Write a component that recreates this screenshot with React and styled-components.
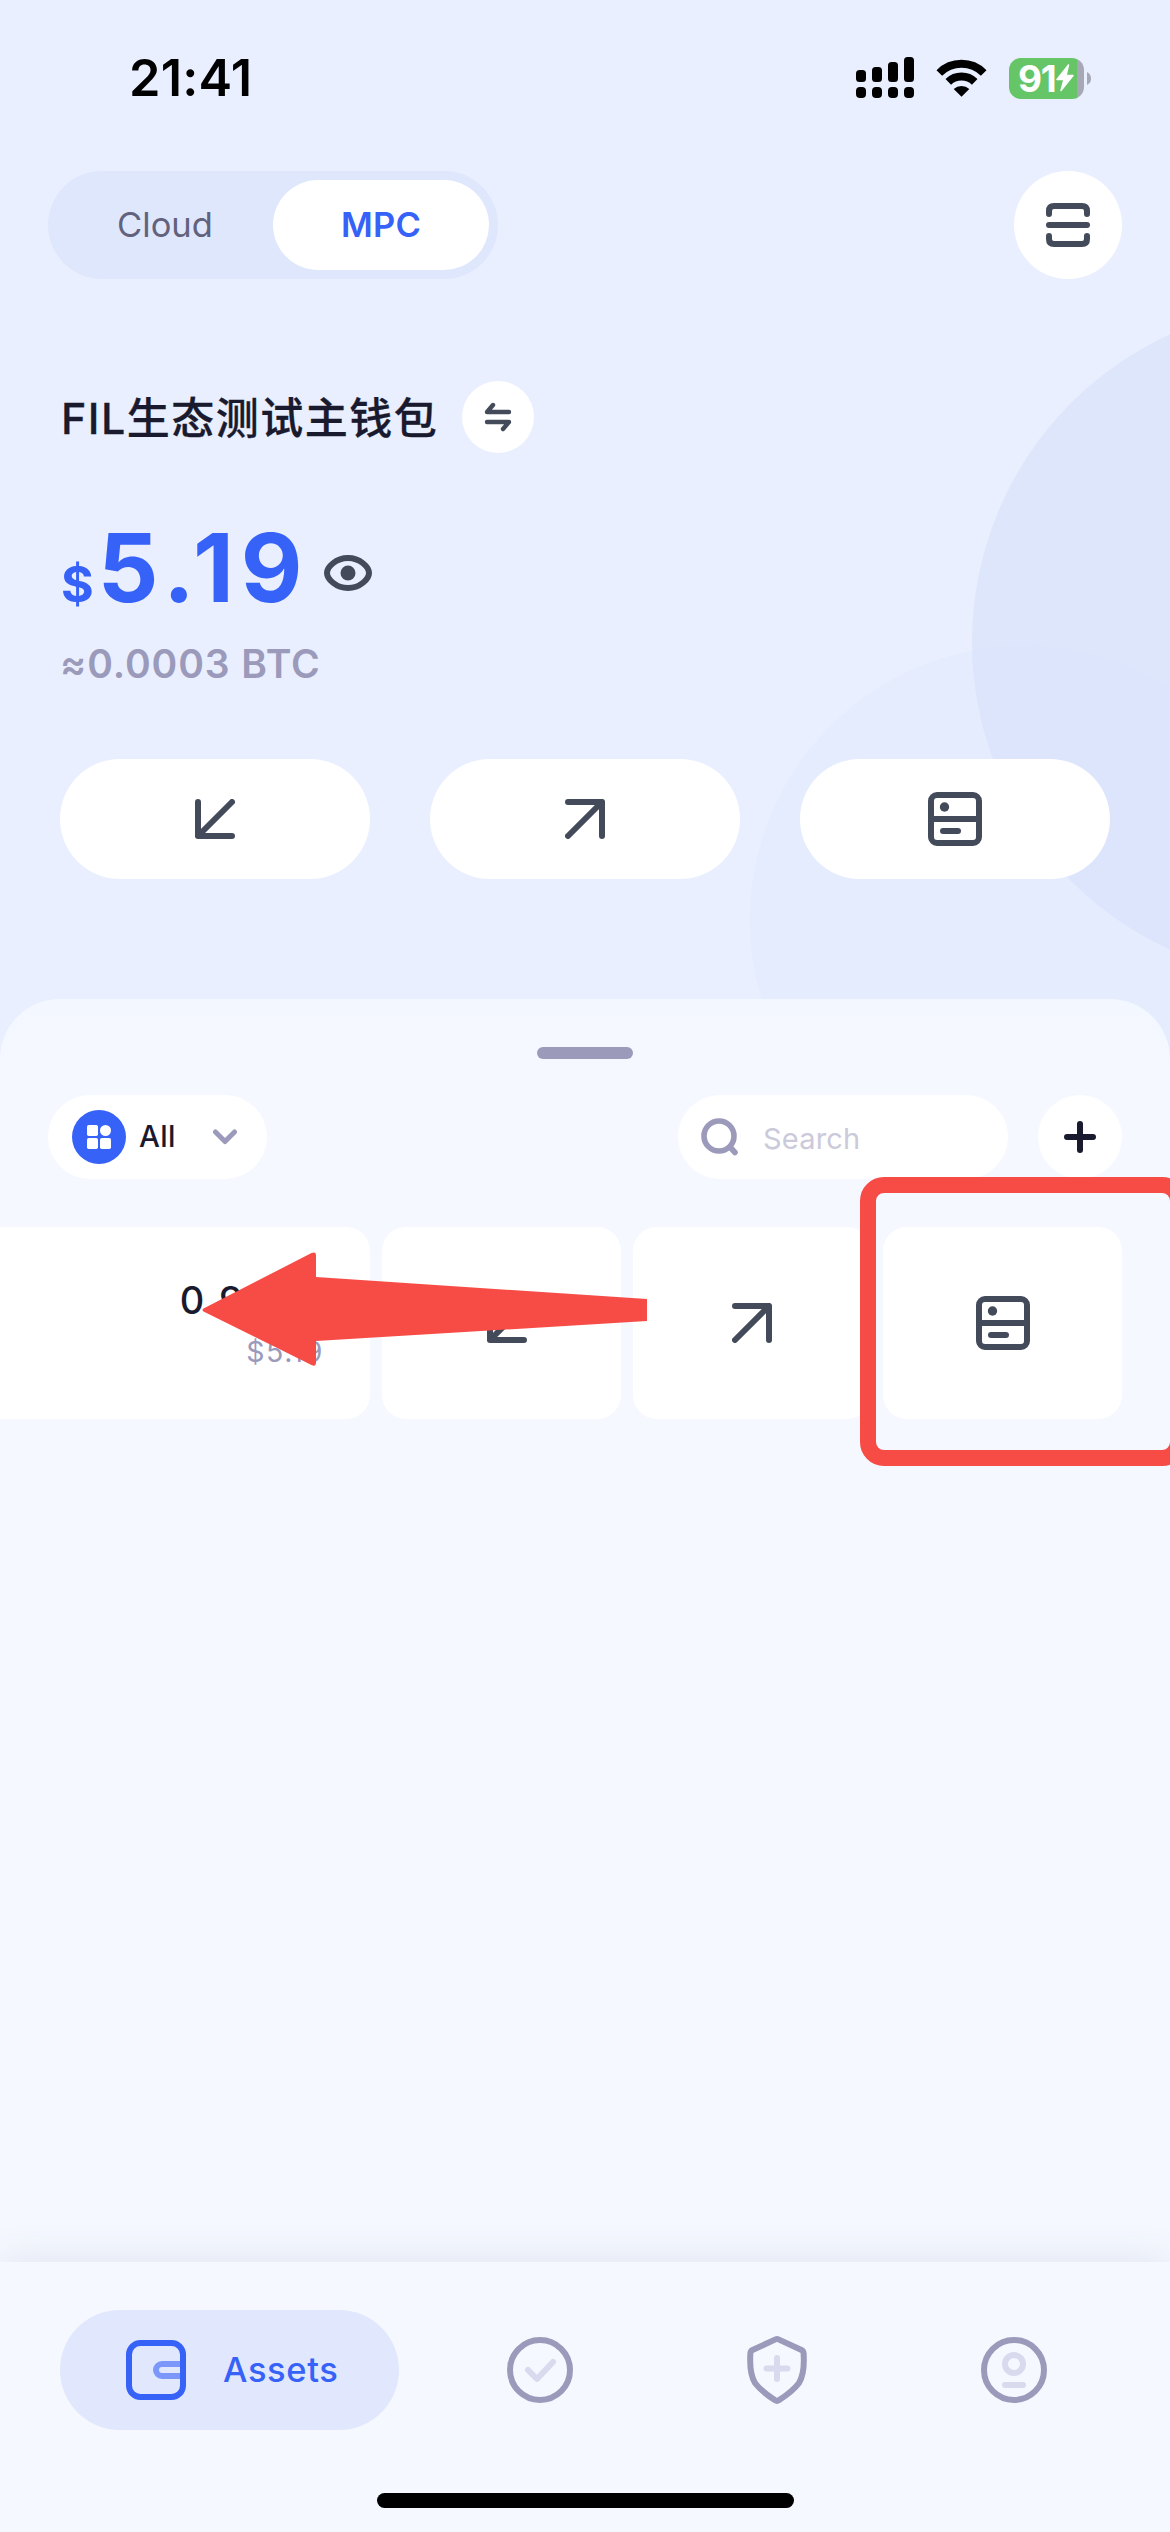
import React from "react";
import styled, { createGlobalStyle } from "styled-components";

const Global = createGlobalStyle`
  * { box-sizing: border-box; }
  body { margin: 0; background: #f5f8ff; }
`;

const INK = "#1a1a2e";
const SLATE = "#434a5a";
const BLUE = "#3662f8";
const MUTED = "#9b9aba";
const PALE = "#d9daee";
const RED = "#f74b46";

const Screen = styled.div`
  position: relative;
  isolation: isolate;
  display: flex;
  flex-direction: column;
  width: 1170px;
  height: 2532px;
  overflow: hidden;
  background: #e9effe;
  font-family: Inter, Roboto, "Noto Sans CJK SC", sans-serif;
  color: ${INK};
`;

const Orb = styled.div`
  position: absolute;
  z-index: -1;
  left: ${(p) => p.$cx - p.$r}px;
  top: ${(p) => p.$cy - p.$r}px;
  width: ${(p) => p.$r * 2}px;
  height: ${(p) => p.$r * 2}px;
  border-radius: 50%;
  background: ${(p) => p.$fill};
`;

const StatusBar = styled.header`
  display: flex;
  align-items: center;
  height: 156px;
  padding: 0 79px 0 129px;
`;
const Clock = styled.div`
  flex: 1;
  font-size: 50.5px;
  font-weight: 600;
  line-height: 60px;
  letter-spacing: 0.2px;
  color: #000;
`;
const StatusIcons = styled.div`
  display: flex;
  align-items: center;
  gap: 22px;
`;
const BatteryWrap = styled.div`
  display: flex;
  align-items: center;
  gap: 3px;
`;
const Battery = styled.div`
  display: flex;
  align-items: center;
  width: 75px;
  height: 41px;
  padding-left: 9px;
  border-radius: 12px;
  background: linear-gradient(90deg, #66c567 68px, #a6a8b5 68px);
  color: #fff;
  font-size: 37px;
  font-weight: 700;
  line-height: 41px;
  letter-spacing: -1.2px;
`;

const TopBar = styled.div`
  display: flex;
  justify-content: space-between;
  margin-top: 15px;
  padding: 0 48px;
`;
const Segmented = styled.div`
  display: flex;
  width: 450px;
  height: 108px;
  padding: 9px;
  border-radius: 54px;
  background: #dfe7fd;
`;
const Segment = styled.button`
  flex: 1;
  border: 0;
  padding: 0 0 2px;
  border-radius: 45px;
  font: inherit;
  font-size: 34.5px;
  letter-spacing: ${(p) => (p.$active ? 0.2 : 0)}px;
  font-weight: ${(p) => (p.$active ? 600 : 400)};
  color: ${(p) => (p.$active ? BLUE : "#63627d")};
  background: ${(p) => (p.$active ? "#fff" : "transparent")};
`;
const RoundButton = styled.button`
  display: flex;
  align-items: center;
  justify-content: center;
  width: ${(p) => p.$size}px;
  height: ${(p) => p.$size}px;
  padding: 0;
  border: 0;
  border-radius: 50%;
  background: #fff;
`;

const WalletRow = styled.div`
  display: flex;
  align-items: center;
  gap: 24px;
  height: 72px;
  margin-top: 102px;
  padding-left: 61px;
`;
const WalletName = styled.h1`
  margin: 2px 0 0;
  font-size: 43px;
  font-weight: 500;
  line-height: 60px;
  letter-spacing: 1.5px;
  -webkit-text-stroke: 0.3px currentColor;
`;
const BalanceRow = styled.div`
  display: flex;
  align-items: baseline;
  height: 116px;
  margin-top: 57px;
  padding-left: 61px;
  color: ${BLUE};
  line-height: 116px;
`;
const Currency = styled.span`
  font-size: 50px;
  font-weight: 700;
`;
const Balance = styled.span`
  margin-left: 4px;
  font-size: 95px;
  font-weight: 700;
  letter-spacing: 6.8px;
`;
const EyeButton = styled.span`
  display: flex;
  align-self: center;
  margin: 9px 0 0 15px;
`;
const Approx = styled.div`
  margin-top: 13px;
  padding-left: 60px;
  font-size: 39px;
  font-weight: 600;
  line-height: 50px;
  letter-spacing: 0.9px;
  color: ${MUTED};
`;
const Actions = styled.div`
  display: flex;
  gap: 60px;
  margin-top: 70px;
  padding: 0 60px;
`;
const ActionPill = styled.button`
  display: flex;
  flex: 1;
  align-items: center;
  justify-content: center;
  height: 120px;
  padding: 0;
  border: 0;
  border-radius: 60px;
  background: #fff;
`;

const Sheet = styled.main`
  display: flex;
  flex: 1;
  flex-direction: column;
  margin-top: 120px;
  border-radius: 60px 60px 0 0;
  background: linear-gradient(180deg, #f3f7ff 0, #f5f8ff 90px);
`;
const Handle = styled.div`
  align-self: center;
  width: 96px;
  height: 12px;
  margin-top: 48px;
  border-radius: 6px;
  background: ${MUTED};
`;
const Filters = styled.div`
  display: flex;
  gap: 30px;
  margin-top: 36px;
  padding: 0 48px;
`;
const NetworkPicker = styled.button`
  display: flex;
  align-items: center;
  width: 219px;
  height: 84px;
  margin-right: auto;
  padding: 0 30px 0 24px;
  border: 0;
  border-radius: 42px;
  background: #fff;
  color: ${INK};
  font: inherit;
  font-size: 29.5px;
  font-weight: 500;
  letter-spacing: 0.3px;
`;
const NetworkBadge = styled.span`
  display: flex;
  align-items: center;
  justify-content: center;
  width: 54px;
  height: 54px;
  margin-right: 13px;
  border-radius: 50%;
  background: ${BLUE};
`;
const NetworkLabel = styled.span`
  flex: 1;
  text-align: left;
  margin-top: -3px;
`;
const SearchField = styled.div`
  display: flex;
  align-items: center;
  gap: 24px;
  width: 330px;
  height: 84px;
  padding-left: 23px;
  border-radius: 42px;
  background: #fff;
  color: #cbcadb;
  font-size: 29px;
  letter-spacing: 0.2px;
`;
const SearchText = styled.span`
  margin-top: 3px;
`;

const AssetRow = styled.div`
  display: grid;
  grid-template-columns: 370px repeat(3, 1fr);
  gap: 12px;
  height: 192px;
  margin-top: 48px;
  padding-right: 48px;
`;
const AssetCard = styled.div`
  display: flex;
  flex-direction: column;
  align-items: flex-end;
  padding: 50px 46px 0 0;
  border-radius: 0 24px 24px 0;
  background: #fff;
`;
const Amount = styled.div`
  font-size: 38px;
  font-weight: 500;
  line-height: 46px;
  letter-spacing: 2.3px;
`;
const Fiat = styled.div`
  margin-top: 11px;
  font-size: 28.5px;
  line-height: 36px;
  letter-spacing: 1.6px;
  color: ${MUTED};
`;
const CardAction = styled.button`
  display: flex;
  min-width: 0;
  align-items: center;
  justify-content: center;
  padding: 0 0 0 ${(p) => p.$inset || 0}px;
  border: 0;
  border-radius: 24px;
  background: #fff;
`;

const TabBar = styled.nav`
  display: flex;
  flex-direction: column;
  align-items: center;
  height: 270px;
  padding-top: 48px;
  background: #f5f8ff;
  box-shadow: 0 0 40px rgba(60, 70, 110, 0.12);
`;
const Tabs = styled.div`
  display: flex;
  align-items: center;
  width: 100%;
  padding: 0 37px 0 60px;
`;
const ActiveTab = styled.button`
  display: flex;
  align-items: center;
  gap: 37px;
  width: 339px;
  height: 120px;
  margin-right: 22px;
  padding: 0 0 0 66px;
  border: 0;
  border-radius: 60px;
  background: #e1e7fc;
  color: ${BLUE};
  font: inherit;
  font-size: 34.5px;
  font-weight: 500;
  letter-spacing: 0.6px;
`;
const TabLabel = styled.span`
  margin-top: -2px;
`;
const Tab = styled.button`
  display: flex;
  flex: 1;
  justify-content: center;
  padding: 0;
  border: 0;
  background: none;
`;
const HomeIndicator = styled.div`
  width: 417px;
  height: 15px;
  margin-top: 63px;
  border-radius: 8px;
  background: #000;
`;

const HighlightBox = styled.div`
  position: absolute;
  left: 860px;
  top: 1177px;
  width: 326px;
  height: 289px;
  border: 16px solid ${RED};
  border-radius: 24px;
`;
const PointerArrow = styled.svg`
  position: absolute;
  left: 200px;
  top: 1250px;
`;

const stroke = (color, width = 6) => ({
  fill: "none",
  stroke: color,
  strokeWidth: width,
  strokeLinecap: "round",
  strokeLinejoin: "round",
});

const CellularIcon = () => (
  <svg width="58" height="42" viewBox="0 0 58 42">
    {[13, 10, 5, 0].map((top, i) => (
      <g key={top}>
        <rect x={i * 16} y={top} width="10" height={25 - top} rx="3.5" />
        <rect x={i * 16} y="30" width="10" height="11" rx="4" />
      </g>
    ))}
  </svg>
);

const WifiIcon = () => (
  <svg width="51" height="38" viewBox="0 0 51 38">
    <path d="M3.3 14A31.5 31.5 0 0 1 47.700 14" fill="none" stroke="#000" strokeWidth="8" />
    <path d="M12.300 22.800A19 19 0 0 1 38.700 22.800" fill="none" stroke="#000" strokeWidth="8" />
    <path d="M17.700 30A11.500 11.500 0 0 1 33.300 30L25.500 37.700Z" />
  </svg>
);

const BoltIcon = () => (
  <svg width="18" height="28" viewBox="0 0 18 28">
    <path d="M12.500 1L1 15.500h7L5 26.500 17 11.500h-7z" fill="#fff" stroke="#fff" strokeWidth="1.500" strokeLinejoin="round" />
  </svg>
);

const BatteryCap = () => (
  <svg width="4" height="13" viewBox="0 0 4 13">
    <path d="M0 0Q4 2 4 6.500T0 13Z" fill="#a6a8b5" />
  </svg>
);

const ScanIcon = () => (
  <svg width="44" height="44" viewBox="0 0 44 44" {...stroke(SLATE)}>
    <path d="M3 11V8Q3 3 8 3H36Q41 3 41 8V11M3 22H41M3 33V36Q3 41 8 41H36Q41 41 41 36V33" />
  </svg>
);

const SwapIcon = () => (
  <svg width="28" height="30" viewBox="0 0 28 30" {...stroke(SLATE, 4.4)}>
    <path d="M25 10H3L9 3M3 20H25L19 27" />
  </svg>
);

const EyeIcon = () => (
  <svg width="48" height="36" viewBox="0 0 48 36">
    <path d="M3 18C3 12 12 3 24 3S45 12 45 18 36 33 24 33 3 24 3 18Z" {...stroke(SLATE)} />
    <circle cx="24" cy="18" r="7.500" fill={SLATE} />
  </svg>
);

const ReceiveIcon = () => (
  <svg width="40" height="40" viewBox="0 0 40 40" {...stroke(SLATE)}>
    <path d="M3 3V37H37M3 37L37 3" />
  </svg>
);

const SendIcon = () => (
  <svg width="40" height="40" viewBox="0 0 40 40" {...stroke(SLATE)}>
    <path d="M3 3H37V37M37 3L3 37" />
  </svg>
);

const RecordsIcon = () => (
  <svg width="54" height="54" viewBox="0 0 54 54">
    <rect x="3" y="3" width="48" height="48" rx="6" {...stroke(SLATE)} />
    <path d="M3 27H51M15 39H30" {...stroke(SLATE)} />
    <circle cx="16.500" cy="15" r="4.700" fill={SLATE} />
  </svg>
);

const GridIcon = () => (
  <svg width="24" height="24" viewBox="0 0 24 24" fill="#fff">
    <rect width="11" height="11" rx="1.800" />
    <circle cx="18.500" cy="5.500" r="5.500" />
    <rect y="13" width="11" height="11" rx="1.800" />
    <rect x="13" y="13" width="11" height="11" rx="1.800" />
  </svg>
);

const ChevronIcon = () => (
  <svg width="24" height="16" viewBox="0 0 24 16" {...stroke(MUTED, 5)}>
    <path d="M2.500 3L12 12.500 21.500 3" />
  </svg>
);

const SearchIcon = () => (
  <svg width="38" height="38" viewBox="0 0 38 38" {...stroke(MUTED, 5.600)}>
    <circle cx="18" cy="18" r="15" />
    <path d="M29 29L34 34.500" />
  </svg>
);

const PlusIcon = () => (
  <svg width="32" height="32" viewBox="0 0 32 32" {...stroke(INK)}>
    <path d="M16 3V29M3 16H29" />
  </svg>
);

const WalletIcon = () => (
  <svg width="60" height="60" viewBox="0 0 60 60">
    <path d="M54 24H36A6 6 0 0 0 36 36H54" fill="none" stroke="#7b97fa" strokeWidth="6" />
    <rect x="3" y="3" width="54" height="54" rx="11.500" {...stroke(BLUE)} />
  </svg>
);

const CheckIcon = () => (
  <svg width="66" height="66" viewBox="0 0 66 66">
    <circle cx="33" cy="33" r="30" {...stroke(MUTED)} />
    <path d="M21 33L30 42 46 25" {...stroke(PALE)} />
  </svg>
);

const ShieldIcon = () => (
  <svg width="60" height="68" viewBox="0 0 60 68">
    <path
      d="M28.500 3.400Q30 2.700 31.500 3.400L54.500 14Q56.500 15 56.600 17.500C57.500 31 56.500 39.500 52 47C47.500 53 40 59 31.800 64.300Q30 65.500 28.200 64.300C20 59 12.500 53 8 47C3.500 39.500 2.500 31 3.400 17.500Q3.500 15 5.500 14Z"
      {...stroke(MUTED)}
    />
    <path d="M30 22V43M19.500 32.500H40.500" {...stroke(PALE)} />
  </svg>
);

const ProfileIcon = () => (
  <svg width="66" height="66" viewBox="0 0 66 66">
    <circle cx="33" cy="33" r="30" {...stroke(MUTED)} />
    <circle cx="33" cy="27" r="9" {...stroke(PALE)} />
    <path d="M24 48H42" {...stroke(PALE)} />
  </svg>
);

export default function App() {
  return (
    <Screen>
      <Global />
      <Orb $cx={1310} $cy={642} $r={338} $fill="#dee6fb" />
      <Orb $cx={1024} $cy={920} $r={274} $fill="rgba(216, 228, 254, 0.25)" />

      <StatusBar>
        <Clock>21:41</Clock>
        <StatusIcons>
          <CellularIcon />
          <WifiIcon />
          <BatteryWrap>
            <Battery>
              91
              <BoltIcon />
            </Battery>
            <BatteryCap />
          </BatteryWrap>
        </StatusIcons>
      </StatusBar>

      <TopBar>
        <Segmented>
          <Segment>Cloud</Segment>
          <Segment $active>MPC</Segment>
        </Segmented>
        <RoundButton $size={108} aria-label="Scan">
          <ScanIcon />
        </RoundButton>
      </TopBar>

      <WalletRow>
        <WalletName>FIL生态测试主钱包</WalletName>
        <RoundButton $size={72} aria-label="Switch wallet">
          <SwapIcon />
        </RoundButton>
      </WalletRow>

      <BalanceRow>
        <Currency>$</Currency>
        <Balance>5.19</Balance>
        <EyeButton>
          <EyeIcon />
        </EyeButton>
      </BalanceRow>
      <Approx>≈0.0003 BTC</Approx>

      <Actions>
        <ActionPill aria-label="Receive">
          <ReceiveIcon />
        </ActionPill>
        <ActionPill aria-label="Send">
          <SendIcon />
        </ActionPill>
        <ActionPill aria-label="Records">
          <RecordsIcon />
        </ActionPill>
      </Actions>

      <Sheet>
        <Handle />
        <Filters>
          <NetworkPicker>
            <NetworkBadge>
              <GridIcon />
            </NetworkBadge>
            <NetworkLabel>All</NetworkLabel>
            <ChevronIcon />
          </NetworkPicker>
          <SearchField>
            <SearchIcon />
            <SearchText>Search</SearchText>
          </SearchField>
          <RoundButton $size={84} aria-label="Add">
            <PlusIcon />
          </RoundButton>
        </Filters>
        <AssetRow>
          <AssetCard>
            <Amount>0.9966</Amount>
            <Fiat>$5.19</Fiat>
          </AssetCard>
          <CardAction $inset={12} aria-label="Receive">
            <ReceiveIcon />
          </CardAction>
          <CardAction aria-label="Send">
            <SendIcon />
          </CardAction>
          <CardAction aria-label="Records">
            <RecordsIcon />
          </CardAction>
        </AssetRow>
      </Sheet>

      <TabBar>
        <Tabs>
          <ActiveTab>
            <WalletIcon />
            <TabLabel>Assets</TabLabel>
          </ActiveTab>
          <Tab aria-label="Approvals">
            <CheckIcon />
          </Tab>
          <Tab aria-label="Security">
            <ShieldIcon />
          </Tab>
          <Tab aria-label="Profile">
            <ProfileIcon />
          </Tab>
        </Tabs>
        <HomeIndicator />
      </TabBar>

      <HighlightBox />
      <PointerArrow width="448" height="120" viewBox="0 0 448 120">
        <path
          d="M3.500 58.500L111.500 3Q116 1 116 5.500V27L447 49V71L116 91V112Q116 117.500 111.500 115L3.500 61.500Q1.500 60 3.500 58.500Z"
          fill={RED}
        />
      </PointerArrow>
    </Screen>
  );
}
